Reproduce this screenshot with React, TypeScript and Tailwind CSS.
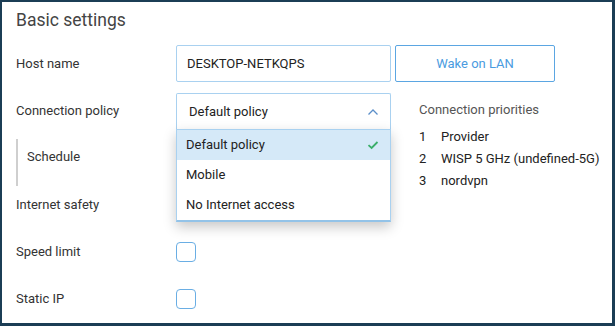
import React from "react";

export default function App() {
  const font = { fontFamily: "Roboto, 'Noto Sans', sans-serif" };
  return (
    <div
      style={font}
      className="w-[615px] h-[326px] bg-white border-l-2 border-t-2 border-r-[3px] border-b-[3px] border-[#1b3d55] overflow-hidden text-[13px] text-[#333]"
    >
      <div className="pl-[14px]">
        <div className="pt-[6px] h-[38px] text-[17.5px] leading-[24px] text-[#444]">Basic settings</div>
        <div className="grid grid-cols-[160px_215px_1fr] auto-rows-[47px]">
          {/* Row 1 */}
          <div className="flex items-center">Host name</div>
          <div className="flex items-center">
            <div className="w-full h-[37px] border border-[#a9d1f0] rounded-[2px] flex items-center px-[10px] text-[#222]">
              DESKTOP-NETKQPS
            </div>
          </div>
          <div className="flex items-center pl-[4px]">
            <button className="w-[160px] h-[37px] border border-[#5ba6e2] rounded-[2px] text-[#4a9be0] flex items-center justify-center">
              Wake on LAN
            </button>
          </div>

          {/* Row 2 */}
          <div className="flex items-center">Connection policy</div>
          <div className="flex items-center relative">
            <div className="w-full h-[37px] mt-[2px] border border-[#a9d1f0] border-b-0 rounded-t-[2px] flex items-center justify-between pl-[12px] pr-[10px] text-[#222]">
              <span>Default policy</span>
              <svg width="12" height="8" viewBox="0 0 12 8" className="mr-[1px]">
                <path d="M1.5 6.5 L6 2 L10.5 6.5" fill="none" stroke="#5b8fc9" strokeWidth="1.3" />
              </svg>
            </div>
            <div className="absolute left-0 right-0 top-[42px] z-10 bg-white border border-[#a9d1f0] border-b-[2px] border-b-[#93c3e8] shadow-[0_5px_12px_rgba(0,0,0,0.22)]">
              <div className="h-[30px] bg-[#d5e9f8] flex items-center justify-between pl-[9px] pr-[11px] text-[#222]">
                <span>Default policy</span>
                <svg width="12" height="10" viewBox="0 0 12 10">
                  <path d="M1.5 5.2 L4.6 8 L10.5 2" fill="none" stroke="#3aae6a" strokeWidth="1.8" />
                </svg>
              </div>
              <div className="h-[30px] flex items-center pl-[9px] text-[#222]">Mobile</div>
              <div className="h-[30px] flex items-center pl-[9px] text-[#222]">No Internet access</div>
            </div>
          </div>
          <div className="row-span-3 pl-[28px] pt-[14px]">
            <div className="leading-[18px] text-[#555]">Connection priorities</div>
            <div className="mt-[7px] text-[#222]">
              {[
                ["1", "Provider"],
                ["2", "WISP 5 GHz (undefined-5G)"],
                ["3", "nordvpn"],
              ].map(([n, t]) => (
                <div key={n} className="flex leading-[22px]">
                  <span className="w-[22px]">{n}</span>
                  <span>{t}</span>
                </div>
              ))}
            </div>
          </div>

          {/* Row 3 */}
          <div className="self-start mt-[5px] h-[47px] border-l-2 border-[#cfcfcf] pl-[9px] pt-[9px] leading-[18px]">
            Schedule
          </div>
          <div></div>

          {/* Row 4 */}
          <div className="flex items-center">Internet safety</div>
          <div></div>

          {/* Row 5 */}
          <div className="flex items-center">Speed limit</div>
          <div className="flex items-center">
            <div className="w-[20px] h-[20px] border border-[#6aaee4] rounded-[4px]"></div>
          </div>
          <div></div>

          {/* Row 6 */}
          <div className="flex items-center">Static IP</div>
          <div className="flex items-center">
            <div className="w-[20px] h-[20px] border border-[#6aaee4] rounded-[4px]"></div>
          </div>
          <div></div>
        </div>
      </div>
    </div>
  );
}
